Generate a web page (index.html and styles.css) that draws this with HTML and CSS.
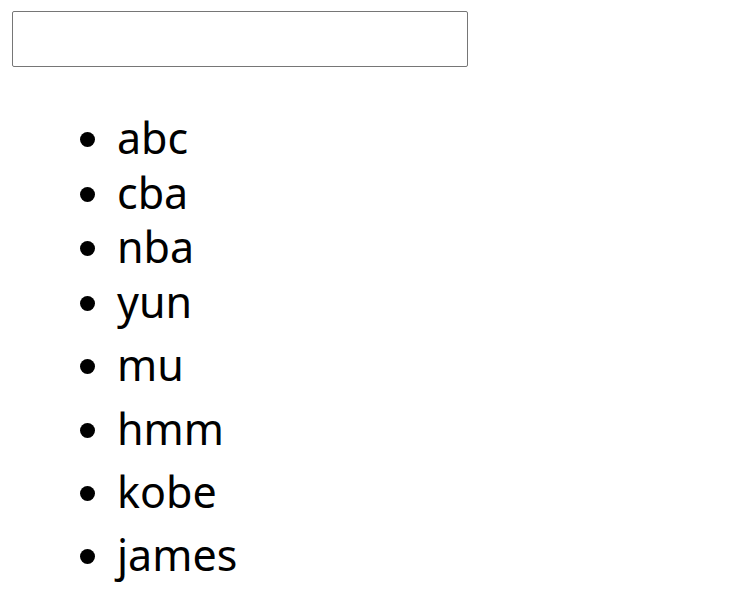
FILE: index.html
```html
<!DOCTYPE html>
<html>
<head>
<meta charset="utf-8">
<link rel="stylesheet" href="styles.css">
</head>
<body>
<input class="search" type="text">
<ul class="list">
  <li class="item">abc</li>
  <li class="item">cba</li>
  <li class="item">nba</li>
  <li class="item">yun</li>
  <li class="item item-spaced">mu</li>
  <li class="item item-spaced">hmm</li>
  <li class="item item-spaced">kobe</li>
  <li class="item item-spaced">james</li>
</ul>
</body>
</html>
```
FILE: styles.css
```css
html, body {
  margin: 0;
  padding: 0;
  background: #ffffff;
}
body {
  font-family: "Noto Sans", "Open Sans", sans-serif;
  color: #000;
}
.search {
  display: block;
  box-sizing: border-box;
  margin: 11px 0 0 12px;
  width: 456px;
  height: 56px;
  border: 1px solid #767676;
  border-radius: 2px;
  padding: 0 4px;
  font-size: 16px;
  background: #fff;
  outline: none;
}
.list {
  margin: 44px 0 0 0;
  padding: 0 0 0 117px;
  font-size: 43px;
  list-style: disc;
}
.item {
  line-height: 54.7px;
}
.item-spaced {
  margin-top: 8.6px;
}
```
